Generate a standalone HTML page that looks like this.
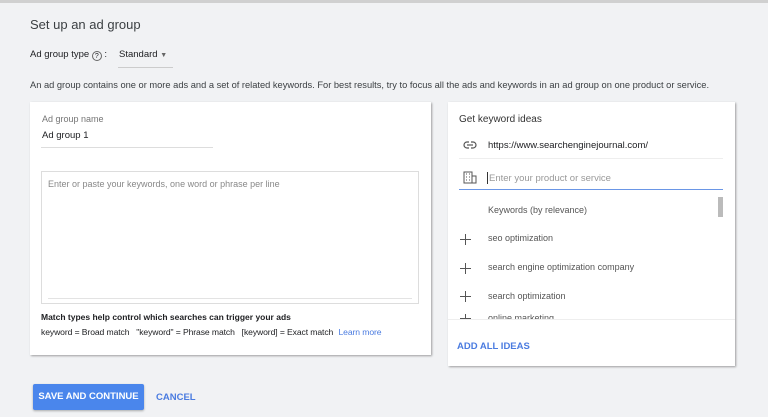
<!DOCTYPE html>
<html><head><style>
*{margin:0;padding:0;box-sizing:border-box}
body{width:768px;height:417px;background:#f1f2f4;font-family:"Liberation Sans",Arial,sans-serif;position:relative;overflow:hidden;color:#202124}
.a{position:absolute;white-space:nowrap}
.card{position:absolute;background:#fff;box-shadow:1px 1px 2px rgba(0,0,0,.35)}
.g{color:#757575}
.p{position:absolute;left:12px;width:11px;height:11px}
.p:before{content:"";position:absolute;left:0;top:5px;width:11px;height:1px;background:#555}
.p:after{content:"";position:absolute;left:5px;top:0;width:1px;height:11px;background:#555}
</style></head><body>
<div class="a" style="left:0;top:0;width:768px;height:3px;background:#d0d0d0"></div>
<div class="a" style="left:30px;top:17px;font-size:13px;color:#3c4043">Set up an ad group</div>
<div class="a" style="left:30px;top:49px;font-size:9.5px">Ad group type <span style="display:inline-block;width:10px;height:10px;border:1px solid #666;border-radius:50%;font-size:7px;text-align:center;line-height:9px;vertical-align:-1px">?</span> :</div>
<div class="a" style="left:119px;top:49px;font-size:9.5px">Standard <span style="color:#666;font-size:7px">▼</span></div>
<div class="a" style="left:118px;top:67px;width:55px;height:1px;background:#ccc"></div>
<div class="a" style="left:30px;top:80px;font-size:9.3px;color:#3c4043">An ad group contains one or more ads and a set of related keywords. For best results, try to focus all the ads and keywords in an ad group on one product or service.</div>

<div class="card" style="left:30px;top:102px;width:401px;height:253px">
<div class="a g" style="left:12px;top:12px;font-size:9px">Ad group name</div>
<div class="a" style="left:12px;top:28px;font-size:9.5px">Ad group 1</div>
<div class="a" style="left:11px;top:45px;width:172px;height:1px;background:#ddd"></div>
<div class="a" style="left:11px;top:69px;width:378px;height:133px;border:1px solid #ddd"></div>
<div class="a" style="left:18px;top:77px;font-size:9px;color:#888">Enter or paste your keywords, one word or phrase per line</div>
<div class="a" style="left:18px;top:196px;width:364px;height:1px;background:#e3e3e3"></div>
<div class="a" style="left:11px;top:210px;font-size:8.5px;font-weight:bold">Match types help control which searches can trigger your ads</div>
<div class="a" style="left:11px;top:225px;font-size:8.6px;letter-spacing:-0.1px">keyword = Broad match &nbsp; "keyword" = Phrase match &nbsp; [keyword] = Exact match <span style="color:#4a7be0;margin-left:3px">Learn more</span></div>
</div>

<div class="card" style="left:448px;top:102px;width:287px;height:264px">
<div class="a" style="left:11px;top:12px;font-size:10px;color:#333">Get keyword ideas</div>
<svg class="a" style="left:15px;top:39px" width="14" height="8" viewBox="0 0 14 8"><rect x="1" y="1" width="12" height="6" rx="3" fill="none" stroke="#555" stroke-width="1.2"/><line x1="4" y1="4" x2="10" y2="4" stroke="#555" stroke-width="1.2"/><rect x="6" y="0" width="2" height="3" fill="#fff"/><rect x="6" y="5" width="2" height="3" fill="#fff"/></svg>
<div class="a" style="left:40px;top:38px;font-size:9.5px">https://www.searchenginejournal.com/</div>
<div class="a" style="left:11px;top:56px;width:264px;height:1px;background:#eee"></div>
<svg class="a" style="left:15px;top:69px" width="14" height="13" viewBox="0 0 14 13"><rect x="1" y="1" width="8" height="11" fill="#fff" stroke="#555"/><rect x="9" y="5" width="4" height="7" fill="none" stroke="#555"/><path d="M3 3h1M6 3h1M3 6h1M6 6h1M3 9h1M6 9h1" stroke="#555"/></svg>
<div class="a" style="left:39px;top:70px;width:1px;height:12px;background:#333"></div>
<div class="a" style="left:41px;top:71px;font-size:9.5px;color:#999">Enter your product or service</div>
<div class="a" style="left:11px;top:87px;width:264px;height:1px;background:#6a96e6"></div>
<div class="a" style="left:270px;top:95px;width:5px;height:20px;background:#bbb"></div>
<div class="a g" style="left:40px;top:103px;font-size:9px;color:#555">Keywords (by relevance)</div>
<div class="p" style="top:132px"></div>
<div class="a" style="left:40px;top:131px;font-size:9px;color:#555">seo optimization</div>
<div class="p" style="top:161px"></div>
<div class="a" style="left:40px;top:160px;font-size:9px;color:#555">search engine optimization company</div>
<div class="p" style="top:189px"></div>
<div class="a" style="left:40px;top:189px;font-size:9px;color:#555">search optimization</div>
<div style="position:absolute;left:0;top:208px;width:287px;height:9px;overflow:hidden">
<div class="p" style="top:9px;top:10px"></div>
<div class="a" style="left:40px;top:9px;font-size:9px;color:#555;top:9px"></div>
<div class="a" style="left:40px;top:9px;font-size:9px;color:#555"></div>
<div class="a" style="left:40px;top:3px;font-size:9px;color:#555">online marketing</div></div>
<div class="a" style="left:12px;top:216px;width:11px;height:1px;background:#555"></div>
<div class="a" style="left:17px;top:212px;width:1px;height:5px;background:#555"></div>
<div class="a" style="left:0;top:217px;width:287px;height:1px;background:#eee"></div>
<div class="a" style="left:9px;top:239px;font-size:9.5px;font-weight:bold;color:#4a7be0">ADD ALL IDEAS</div>
</div>

<div class="a" style="left:33px;top:384px;width:111px;height:26px;background:#4a86ec;border-radius:2px;box-shadow:0 1px 2px rgba(0,0,0,.3);color:#fff;font-size:9.5px;font-weight:bold;text-align:center;line-height:26px">SAVE AND CONTINUE</div>
<div class="a" style="left:156px;top:392px;font-size:9.5px;font-weight:bold;color:#4a7be0">CANCEL</div>
</body></html>
